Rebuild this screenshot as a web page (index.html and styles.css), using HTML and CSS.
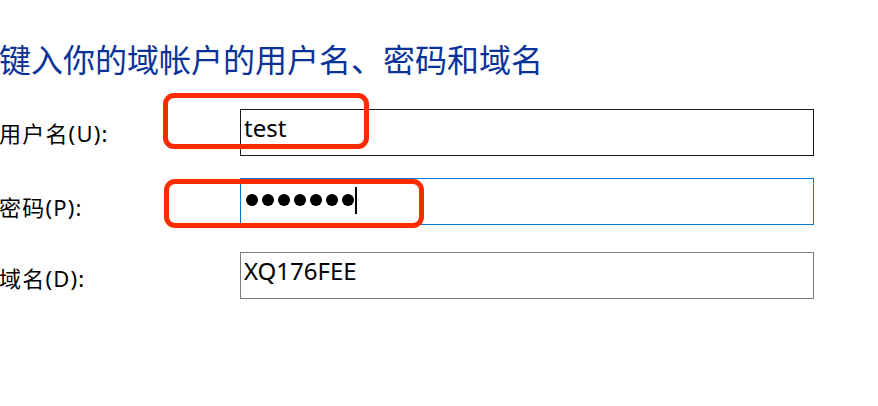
FILE: index.html
```html
<!DOCTYPE html>
<html lang="zh-CN">
<head>
<meta charset="utf-8">
<link rel="stylesheet" href="styles.css">
</head>
<body>
<div class="page">
  <h1 class="title">键入你的域帐户的用户名、密码和域名</h1>
  <div class="form">
    <div class="row row-user">
      <label class="label">用户名(U):</label>
      <div class="field field-dark"><span class="value">test</span></div>
    </div>
    <div class="row row-pass">
      <label class="label">密码(P):</label>
      <div class="field field-focus">
        <span class="dots"><i class="dot"></i><i class="dot"></i><i class="dot"></i><i class="dot"></i><i class="dot"></i><i class="dot"></i><i class="dot"></i></span><span class="caret"></span>
      </div>
    </div>
    <div class="row row-domain">
      <label class="label">域名(D):</label>
      <div class="field field-gray"><span class="value">XQ176FEE</span></div>
    </div>
  </div>
  <div class="mark mark-user"></div>
  <div class="mark mark-pass"></div>
</div>
</body>
</html>
```
FILE: styles.css
```css
html, body {
  margin: 0;
  padding: 0;
  background: #ffffff;
}
.page {
  position: relative;
  width: 878px;
  height: 406px;
  overflow: hidden;
  font-family: "Noto Sans", "Noto Sans CJK SC", sans-serif;
  color: #000;
}
.title {
  margin: 0 0 0 -1px;
  padding: 36px 0 0 0;
  font-weight: normal;
  font-size: 32px;
  line-height: 44px;
  color: #0a3399;
  font-family: "Noto Sans CJK SC", sans-serif;
}
.form {
  display: flex;
  flex-direction: column;
  margin-top: 29px;
}
.row {
  display: grid;
  grid-template-columns: 240px 574px;
  align-items: center;
}
.row-pass { margin-top: 22px; }
.row-domain { margin-top: 27px; }
.label {
  font-size: 22px;
  line-height: 28px;
  letter-spacing: 1.2px;
  margin-left: -1px;
  font-family: "Noto Sans", "Noto Sans CJK SC", sans-serif;
}
.row-user .label { padding-top: 1px; }
.row-pass .label { padding-top: 10px; }
.row-domain .label { padding-top: 4px; }
.field {
  box-sizing: border-box;
  height: 47px;
  border: 1px solid #1a1a1a;
  padding: 2px 0 0 3px;
  display: flex;
  align-items: flex-start;
}
.field-focus { border-color: #0078d7; padding-top: 0; align-items: center; }
.field-gray { border-color: #7a7a7a; }
.value {
  font-size: 24px;
  line-height: 32px;
}
.dots {
  display: flex;
  gap: 4px;
  margin-left: 2px;
  margin-top: -3px;
}
.dot {
  display: block;
  width: 12px;
  height: 12px;
  border-radius: 50%;
  background: #000;
}
.caret {
  width: 2px;
  height: 27px;
  background: #000;
  margin-left: 1px;
  margin-top: -3px;
}
.mark {
  position: absolute;
  box-sizing: border-box;
  border: 5px solid #ff2a00;
  border-radius: 11px;
}
.mark-user {
  left: 163px;
  top: 93px;
  width: 206px;
  height: 56px;
}
.mark-pass {
  left: 164px;
  top: 179px;
  width: 260px;
  height: 49px;
}
```
